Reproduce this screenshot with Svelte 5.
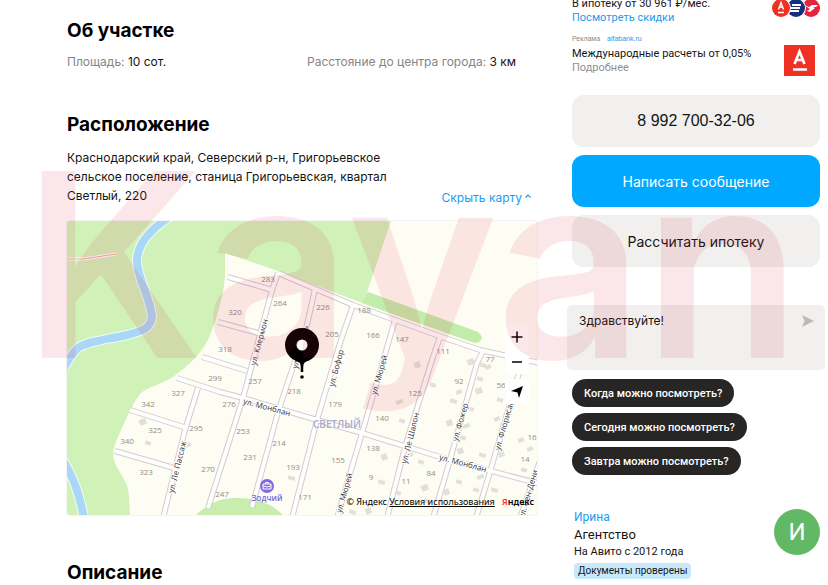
<script lang="ts">
  type Label = [string, number, number];
  type Street = [string, number, number, number];

  const questions = [
    "Когда можно посмотреть?",
    "Сегодня можно посмотреть?",
    "Завтра можно посмотреть?",
  ];

  let message = $state("Здравствуйте!");
  let mapOpen = $state(true);

  const roads = [
    "M177 378L220 392L243 398L317 420L362 433L450 460L540 484",
    "M278 273L353 305L395 320L442 337L480 350L540 363",
    "M198 388L185 430L163 518",
    "M278 273L272 290L243 398L208 508",
    "M315 289L307 325L278 412L252 507",
    "M353 305L340 343L317 420L292 518",
    "M395 320L362 433L337 518",
    "M440 337L432 360L405 447L387 518",
    "M483 351L477 363L450 460L433 518",
    "M521 366L490 472L476 518",
    "M542 455L520 518",
    "M228 277L272 290",
    "M218 322L258 333",
    "M202 357L247 371",
    "M130 410L187 428",
    "M115 451L174 468",
  ];

  const numbers: Label[] = [
    ["283", 268, 282], ["264", 280, 306], ["226", 323, 310], ["188", 364, 313],
    ["320", 235, 315], ["318", 225, 352], ["205", 332, 337], ["166", 373, 338],
    ["147", 402, 342], ["111", 443, 354], ["77", 490, 362], ["299", 215, 381],
    ["257", 255, 384], ["218", 294, 394], ["179", 335, 407], ["125", 415, 396],
    ["92", 459, 384], ["56", 501, 388], ["342", 148, 407], ["327", 178, 396],
    ["325", 155, 433], ["295", 196, 431], ["276", 229, 407], ["340", 127, 444],
    ["323", 146, 475], ["253", 243, 434], ["214", 279, 446], ["231", 250, 460],
    ["270", 208, 472], ["247", 222, 497], ["193", 293, 470], ["155", 338, 463],
    ["171", 305, 500], ["140", 382, 421], ["138", 373, 451], ["9", 371, 480],
    ["84", 431, 476], ["11", 406, 484], ["16", 532, 440], ["14", 525, 462],
  ];

  const streets: Street[] = [
    ["ул. Клермон", 259, 342, -75],
    ["ул. Бургонь", 300, 347, -75],
    ["ул. Бофор", 336, 368, -75],
    ["ул. Мюрей", 379, 375, -74],
    ["ул. Мюрей", 344, 493, -74],
    ["ул. Ле Шалон", 410, 438, -76],
    ["ул. Фожер", 460, 422, -74],
    ["ул. Флорисан", 504, 425, -74],
    ["ул. Сен-Дени", 528, 494, -74],
    ["ул. Ле Пассаж", 177, 467, -76],
    ["ул. Монблан", 267, 407, 15],
    ["ул. Монблан", 463, 463, 15],
  ];

  const houses = [
    [142, 421], [148, 443], [188, 445], [291, 478], [417, 364], [433, 385],
    [399, 402], [402, 421], [384, 456], [381, 482], [410, 455], [421, 462],
    [424, 487], [398, 493], [459, 392], [453, 401], [449, 422], [471, 409],
    [466, 426], [463, 438], [460, 450], [482, 365], [488, 367], [480, 379],
    [478, 390], [500, 400], [497, 419], [482, 455], [501, 453], [459, 482],
    [480, 477], [476, 490], [446, 491], [494, 490], [530, 449], [524, 470],
    [470, 361], [509, 360], [521, 440], [352, 512], [368, 510], [427, 501],
  ];
</script>

<div class="page">
  <main class="details">
    <h2>Об участке</h2>
    <dl class="facts">
      <div><dt>Площадь:</dt> <dd>10 сот.</dd></div>
      <div><dt>Расстояние до центра города:</dt> <dd>3 км</dd></div>
    </dl>

    <h2 class="spaced">Расположение</h2>
    <div class="location">
      <address>
        Краснодарский край, Северский р-н, Григорьевское сельское поселение, станица Григорьевская,
        квартал Светлый, 220
      </address>
      <button class="toggle" type="button" onclick={() => (mapOpen = !mapOpen)}>
        {mapOpen ? "Скрыть карту" : "Показать карту"}
        <svg class:closed={!mapOpen} width="6" height="8" viewBox="0 0 6 8" aria-hidden="true">
          <path d="M.5 3.500L3 1L5.500 3.500" fill="none" stroke="currentColor" stroke-width="1.200" />
        </svg>
      </button>
    </div>

    {#if mapOpen}
      <div class="map">
        <svg class="canvas" viewBox="67 221 470 294" role="img" aria-label="Карта: Светлый, 220">
          <rect x="67" y="221" width="470" height="294" fill="#fefdf4" />
          <path
            d="M67 221H391L367 292L478 332Q484 337 480 341Q477 344 472 342L370 306L278 271L225 253V275
              C224 292 219 314 208 340C200 355 188 366 173 377C158 386 149 386 140 394
              C131 406 128 416 121 430C114 446 111 453 115 463C119 473 129 482 129 497L130 515H67Z"
            fill="#d0f1b8"
          />
          <path d="M368 292L478 332Q484 337 480 341Q477 344 472 342L362 303Z" fill="#c2ecaa" />
          <path d="M196 515C207 505 217 499 232 498C252 497 270 502 283 515Z" fill="#c9edae" />

          <g fill="none">
            {#each [["#f4fbf2", 10], ["#a9d7f7", 8]] as [stroke, width]}
              <g {stroke} stroke-width={width}>
                <path d="M171 216C152 228 138 242 137 260C137 279 149 293 152 316C151 329 142 331 127 335C105 340 88 341 78 348C72 353 68 360 64 368" />
                <path d="M63 460C73 477 79 492 84 518" />
              </g>
            {/each}
            <path d="M67 259H83L116 254" stroke="#fff" stroke-width="3" />
            <path d="M67 259H83L116 254" stroke="#f3a5aa" />
          </g>

          <g fill="none" stroke="#cfccd8" stroke-width="6" stroke-linejoin="round">
            {#each roads as d}<path {d} />{/each}
          </g>
          <g fill="none" stroke="#fffefb" stroke-width="4" stroke-linejoin="round">
            {#each roads as d}<path {d} />{/each}
          </g>

          {#each houses as [x, y], i}
            <rect
              x={x - 3}
              y={y - 2}
              width={i % 3 ? 6 : 7}
              height={i % 4 ? 4 : 6}
              fill="#e3e0da"
              transform={`rotate(${i % 2 ? 16 : -20} ${x} ${y})`}
            />
          {/each}

          <g class="numbers">
            {#each numbers as [label, x, y]}<text {x} {y}>{label}</text>{/each}
          </g>
          <g class="streets">
            {#each streets as [name, x, y, angle]}
              <text transform={`translate(${x} ${y}) rotate(${angle})`} y="3">{name}</text>
            {/each}
          </g>
          <text class="village" x="337" y="428">СВЕТЛЫЙ</text>

          <circle cx="267" cy="486" r="7" fill="#8068e8" />
          <path d="M263 484H271V489H263ZM265.500 484V482.500H268.500V484M263 486L267 487L271 486" fill="none" stroke="#fff" />
          <text class="place" x="267" y="501">Зодчий</text>

          <path d="M302 358V372" stroke="#000" stroke-width="2.500" />
          <path d="M295 360Q301 362 301 367H303Q303 362 309 360Z" />
          <circle cx="302" cy="345" r="17" />
          <circle cx="302" cy="345" r="5.500" fill="#fff" />
          <circle cx="302" cy="377" r="1.800" />
        </svg>

        <div class="controls">
          <div class="zoom">
            <button type="button" aria-label="Приблизить">
              <svg width="12" height="12" viewBox="0 0 12 12"><path d="M6 .5V11.500M.5 6H11.500" stroke="#000" stroke-width="1.500" /></svg>
            </button>
            <button type="button" aria-label="Отдалить">
              <svg width="12" height="12" viewBox="0 0 12 12"><path d="M1 6H11" stroke="#000" stroke-width="1.500" /></svg>
            </button>
          </div>
          <button class="locate" type="button" aria-label="Моё местоположение">
            <svg width="12" height="12" viewBox="0 0 12 12"><path d="M12 0L8 12L6.500 6.500L0 5Z" /></svg>
          </button>
        </div>
        <div class="copyright">
          <span>© Яндекс <a href="#terms">Условия использования</a></span>
          <span class="yandex"><b>Я</b>ндекс</span>
        </div>
      </div>
    {/if}

    <h2 class="last">Описание</h2>
  </main>

  <aside class="seller">
    <div class="mortgage">
      <div>
        <p>В ипотеку от 30 961 ₽/мес.</p>
        <a href="#discounts">Посмотреть скидки</a>
      </div>
      <svg width="48" height="18" viewBox="0 0 48 18" aria-hidden="true">
        <circle cx="39" cy="9" r="9" fill="#e5243f" />
        <path d="M32 6L37 8L40 6H46L44 8H41L43 9L38 13L35 12L38 10Z" fill="#fff" />
        <circle cx="24" cy="9" r="10" fill="#fff" />
        <circle cx="24" cy="9" r="9" fill="#17317f" />
        <path d="M20 6H29M19 9H28M18 12H27" stroke="#fff" stroke-width="1.800" />
        <circle cx="9" cy="9" r="10" fill="#fff" />
        <circle cx="9" cy="9" r="9" fill="#ef3124" />
        <path d="M6.500 10.500L9 3.500L11.500 10.500M7.500 8H10.500M6 13.500H12" fill="none" stroke="#fff" stroke-width="1.400" />
      </svg>
    </div>

    <div class="ad">
      <div>
        <p class="source">Реклама <a href="#alfabank">alfabank.ru</a></p>
        <p class="offer">Международные расчеты от 0,05%</p>
        <a class="more" href="#offer">Подробнее</a>
      </div>
      <svg width="31" height="31" viewBox="0 0 31 31" aria-hidden="true">
        <rect width="31" height="31" fill="#ef3124" />
        <path d="M10.500 19L15.500 6.500L20.500 19M12 15H19" fill="none" stroke="#fff" stroke-width="2.600" />
        <path d="M9 24.500H23" stroke="#fff" stroke-width="2.600" />
      </svg>
    </div>

    <div class="actions">
      <button class="phone" type="button">8 992 700-32-06</button>
      <button class="primary" type="button">Написать сообщение</button>
      <button type="button">Рассчитать ипотеку</button>
    </div>

    <form class="chat" onsubmit={(event) => event.preventDefault()}>
      <textarea aria-label="Сообщение продавцу" bind:value={message}></textarea>
      <button type="submit" aria-label="Отправить">
        <svg width="12" height="12" viewBox="0 0 12 12"><path d="M0 0L12 6L0 12L2.500 6Z" fill="#bcbab9" /></svg>
      </button>
    </form>

    <div class="chips">
      {#each questions as question}
        <button type="button" onclick={() => (message = question)}>{question}</button>
      {/each}
    </div>

    <div class="agent">
      <div>
        <a href="#seller">Ирина</a>
        <p class="kind">Агентство</p>
        <p>На Авито с 2012 года</p>
        <span class="badge">Документы проверены</span>
      </div>
      <div class="avatar" aria-hidden="true">И</div>
    </div>
  </aside>

  <div class="watermark" aria-hidden="true">Kayan</div>
</div>

<style>
  :global(body) {
    margin: 0;
    background: #fff;
  }

  .page {
    position: relative;
    display: grid;
    grid-template-columns: minmax(0, 1fr) 248px;
    gap: 35px;
    padding: 0 8px 0 67px;
    overflow: hidden;
    font-family: Inter, "Open Sans", sans-serif;
    font-size: 12px;
    color: #151515;
  }

  h2,
  p,
  dl,
  dd {
    margin: 0;
  }

  a {
    color: #1b9bee;
    text-decoration: none;
  }

  button {
    padding: 0;
    border: 0;
    background: none;
    color: inherit;
    font: inherit;
    cursor: pointer;
  }

  .details {
    padding-top: 19px;
  }

  h2 {
    font-size: 19px;
    line-height: 24px;
    font-weight: 700;
    color: #000;
  }

  .facts {
    display: grid;
    grid-template-columns: 240px 1fr;
    margin-top: 9px;
    line-height: 20px;
    white-space: nowrap;
  }

  dt,
  dd {
    display: inline;
  }

  dt {
    color: #858585;
  }

  .spaced {
    margin-top: 41px;
  }

  .location {
    display: flex;
    justify-content: space-between;
    align-items: flex-end;
    margin-top: 11px;
    padding-right: 6px;
  }

  address {
    width: 330px;
    line-height: 19px;
    font-style: normal;
  }

  .toggle {
    display: flex;
    align-items: center;
    gap: 3px;
    line-height: 14px;
    color: #1b9bee;
  }

  .closed {
    transform: rotate(180deg);
  }

  .map {
    position: relative;
    margin-top: 16px;
    border-radius: 3px;
    overflow: hidden;
    box-shadow: 0 0 1px #999;
  }

  .canvas {
    display: block;
    width: 100%;
  }

  .canvas text {
    text-anchor: middle;
    font-family: "Open Sans", sans-serif;
    font-size: 8px;
  }

  .numbers {
    fill: #8e8e8c;
  }

  .streets {
    fill: #333;
    stroke: #fff;
    stroke-width: 2px;
    paint-order: stroke;
  }

  .canvas .village {
    font-size: 10px;
    font-weight: 600;
    fill: #a9a9cc;
  }

  .canvas .place {
    font-weight: 600;
    fill: #7767e0;
  }

  .controls {
    position: absolute;
    top: 103px;
    right: 8px;
    display: grid;
    gap: 5px;
  }

  .zoom {
    display: grid;
    border-radius: 4px;
    background: #fff;
  }

  .controls button {
    display: grid;
    place-items: center;
    width: 24px;
    height: 25px;
  }

  .controls .locate {
    border-radius: 4px;
    background: #fff;
  }

  .copyright {
    position: absolute;
    right: 3px;
    bottom: 7px;
    display: flex;
    align-items: center;
    gap: 7px;
    font: 9px/12px "Noto Sans", sans-serif;
    color: #000;
  }

  .copyright a {
    color: inherit;
    text-decoration: underline;
  }

  .yandex {
    font-weight: 600;
  }

  .yandex b {
    font-weight: inherit;
    color: #f33;
  }

  .last {
    margin-top: 46px;
  }

  .seller {
    font-family: Roboto, sans-serif;
  }

  .mortgage,
  .ad,
  .agent {
    display: flex;
    justify-content: space-between;
  }

  .mortgage {
    margin-top: -3px;
    line-height: 14px;
    font-size: 11px;
  }

  .mortgage svg {
    margin-top: 2px;
  }

  .ad {
    margin-top: 9px;
    line-height: 14px;
    font-size: 11px;
  }

  .ad svg {
    margin: 11px 5px 0 0;
  }

  .source {
    margin-bottom: 3px;
    font: 7px/10px "Liberation Sans", sans-serif;
    color: #888;
  }

  .source a {
    margin-left: 5px;
  }

  .offer {
    white-space: nowrap;
  }

  .more {
    display: block;
    color: #8f8f8f;
  }

  .actions {
    display: grid;
    gap: 8px;
    margin-top: 19px;
  }

  .actions button {
    height: 52px;
    border-radius: 12px;
    background: #f1f0ee;
    font-family: Inter, sans-serif;
    font-size: 14px;
  }

  .actions .phone {
    font-family: "Liberation Sans", sans-serif;
    font-size: 16px;
  }

  .actions .primary {
    position: relative;
    z-index: 1;
    background: #00a8ff;
    color: #fff;
  }

  .chat {
    display: flex;
    align-items: flex-start;
    margin: 38px -5px 0;
    padding: 8px 11px 7px 12px;
    border-radius: 5px;
    background: #f1f0ee;
  }

  textarea {
    flex: 1;
    min-width: 0;
    height: 50px;
    padding: 0;
    border: 0;
    outline: 0;
    resize: none;
    background: none;
    font: 12px/16px Inter, sans-serif;
    color: inherit;
  }

  .chat button {
    display: grid;
    place-items: center;
    height: 16px;
  }

  .chips {
    display: grid;
    justify-items: start;
    gap: 6px;
    margin-top: 9px;
  }

  .chips button {
    height: 28px;
    padding: 0 12px;
    border-radius: 14px;
    background: #272625;
    color: #fff;
    font-size: 11px;
    font-weight: 500;
  }

  .agent {
    margin-top: 34px;
    padding-left: 2px;
    line-height: 17px;
    font-size: 11px;
  }

  .agent a {
    font-size: 12px;
  }

  .agent .kind {
    font-size: 13px;
  }

  .badge {
    display: inline-block;
    margin-top: 3px;
    padding: 0 4px;
    border-radius: 4px;
    background: #c8e8fb;
    font-size: 10px;
    line-height: 16px;
  }

  .avatar {
    display: grid;
    place-items: center;
    width: 46px;
    height: 46px;
    border-radius: 50%;
    background: #62b965;
    color: #fff;
    font-size: 24px;
  }

  .watermark {
    position: absolute;
    top: 109px;
    left: 23px;
    font: 600 257px/312px Inter, sans-serif;
    color: #dc193c1b;
    pointer-events: none;
  }
</style>
